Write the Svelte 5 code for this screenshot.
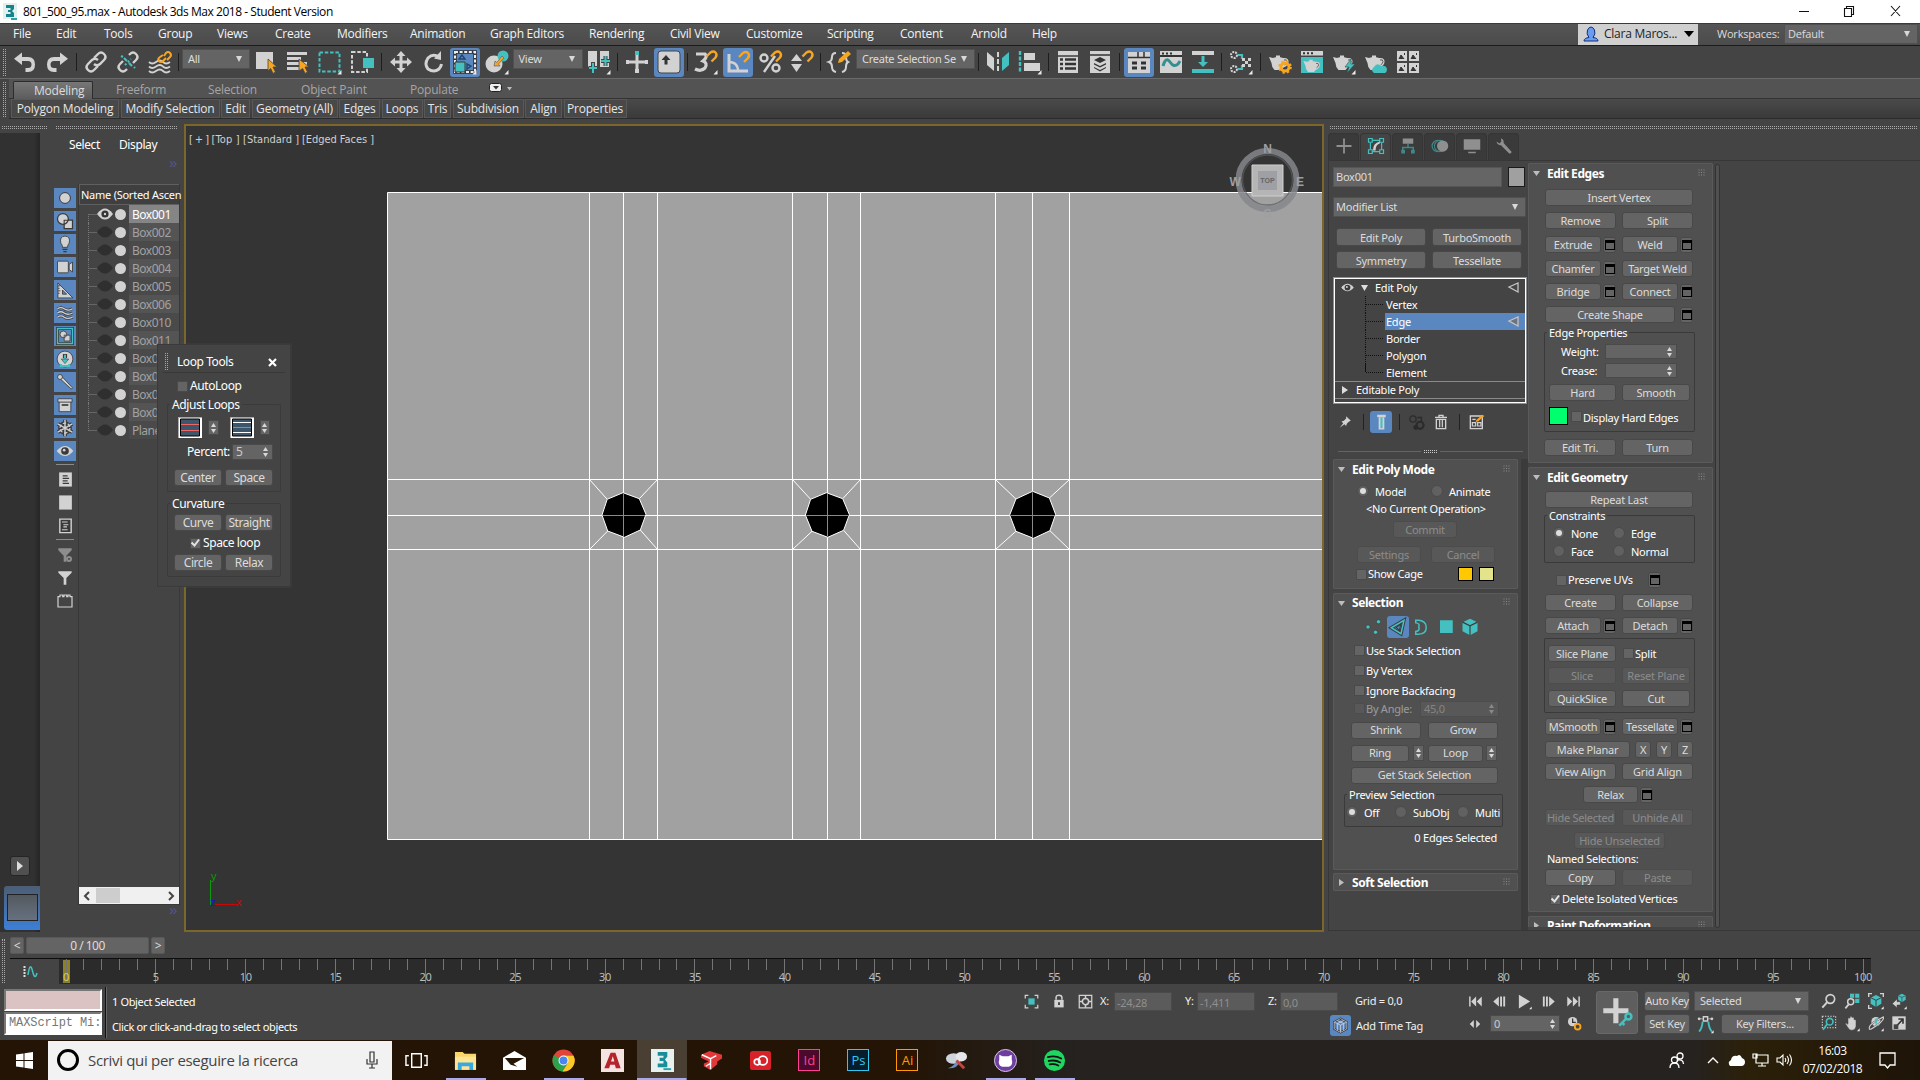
<script>
  const L = '#d2d2d2', T = '#45c0c0', O = '#f8a61f', D = '#3a3a3a';
  const corner = `<path d="M23.500 20v4.500h-4z" fill="#ececec"/>`;
  const pot = `<path d="M1 7l4 1q5-2 10 0 1 0 1.500 0 4 0 4 3.500 0 4-5 6l-2 2.500h-7q-3-3-3-7z M8 5.500h4v2h-4z" fill="${L}"/><path d="M16 10q3-1 3 1.500 0 2-2.500 3.500" fill="none" stroke="#555" stroke-width="1"/>`;
  const magnet = (x, y) => `<g transform="translate(${x} ${y})"><path d="M1 6L5 2q3-2 5 0t0 5L6 11" fill="none" stroke="${O}" stroke-width="2.400"/></g>`;
  const chain = `<g fill="none" stroke="${L}" stroke-width="2.400"><path d="M10 8l4-4q3-3 6 0t0 6l-4 4q-3 2.500-6 0"/><path d="M14 16l-4 4q-3 3-6 0t0-6l4-4q3-2.500 6 0"/></g>`;
  const cubes = `<path d="M12 3l8 4v9l-8 5-8-5V7z" fill="${T}"/><path d="M4 7l8 4 8-4M12 11v10" fill="none" stroke="${D}" stroke-width="1.400"/>`;
  const eye = `<path d="M2 12q10-12 20 0-10 12-20 0z" fill="${L}"/><circle cx="12" cy="12" r="4.600" fill="${D}"/><circle cx="11" cy="11" r="1.600" fill="${L}"/>`;
  const icons = {
    undo: `<path d="M9 2.500v4.500h6q7 0 7 7.500t-7 7.500h-2.500v-4h2.500q3.500 0 3.500-3.500t-3.500-3.500H9V15L1 8.700z" fill="${L}"/>`,
    redo: `<path d="M15 2.500v4.500H9q-7 0-7 7.500t7 7.500h2.500v-4H9q-3.500 0-3.500-3.500T9 11h6V15l8-6.300z" fill="${L}"/>`,
    link: chain,
    unlink: `<g fill="none" stroke="${L}" stroke-width="2.400"><path d="M13 5l1-1q3-3 6 0t0 6l-3 3"/><path d="M11 19l-1 1q-3 3-6 0t0-6l3-3"/></g><path d="M8 8l3 3M16 16l-3-3M5 6l2 1M18 17l1 1" stroke="${T}" stroke-width="2.200"/><path d="M9 15l6-6" stroke="${T}" stroke-width="2" stroke-dasharray="2 2"/>`,
    bind: `<g fill="none" stroke="${L}" stroke-width="1.800"><path d="M1 12q3 3 7 0t7 0 7 0"/><path d="M1 16.500q3 3 7 0t7 0 7 0"/><path d="M1 21q3 3 7 0t7 0 7 0"/></g><g fill="none" stroke="${O}" stroke-width="2"><path d="M16 6l2-3q2-2 4 0t0 4l-3 3"/><path d="M18 8l-3 3q-2 2-4 0t1-4l3-2"/></g>`,
    select: `<path d="M2 2h17v17H2z" fill="${L}"/><path d="M14 9l9 8h-4l2.500 5-2.500 1.500-2.300-5-2.700 2.500z" fill="${O}" stroke="#444" stroke-width=".8"/>`,
    byname: `<path d="M1 2h20v3H1zM1 7h14v3H1zM1 12h20v3H1zM1 17h12v3H1z" fill="${L}"/><path d="M13 9l10 8h-4l2.500 5-2.500 1.500-2.300-5-3.700 2.500z" fill="${O}" stroke="#444" stroke-width=".8"/>`,
    region: `<rect x="1.500" y="2.500" width="20" height="19" fill="none" stroke="${T}" stroke-width="2" stroke-dasharray="3.500 1.800"/>${corner}`,
    crossing: `<rect x="2" y="2" width="15" height="20" fill="none" stroke="${L}" stroke-width="2" stroke-dasharray="3.500 1.800"/><path d="M13 8h11v10H13z" fill="${T}"/>`,
    move: `<path d="M12 1l4.500 5h-3v4.500H18v-3l5 4.500-5 4.500v-3h-4.500V18h3L12 23l-4.500-5h3v-4.500H6v3L1 12l5-4.500v3h4.500V6h-3z" fill="${L}"/>`,
    rotate: `<path d="M18 7q-6-4-11 1-4 6 0 11 6 4 11 0 2-2 2.500-5" fill="none" stroke="${L}" stroke-width="3"/><path d="M13 8.500L20 1v9z" fill="${L}"/>`,
    scale: `<rect x="2" y="2" width="20" height="20" fill="#5b87c0" stroke="#333" stroke-width="3.600"/><rect x="2" y="2" width="20" height="20" fill="none" stroke="#eee" stroke-width="2" stroke-dasharray="3 1.600"/><path d="M2 12h10v10H2z" fill="${T}" stroke="#383838"/><path d="M6 9l3-4 3 4zM14 19v-5l4 2z" fill="none" stroke="#20476a" stroke-width="1.400"/>${corner}`,
    place: `<circle cx="9" cy="14" r="8.500" fill="${L}"/><circle cx="18" cy="6" r="5.500" fill="${T}"/><path d="M9 16l1-5 1.800 1.500L17 6l2 2-5.500 6L15 16z" fill="${O}" stroke="#555" stroke-width=".6"/>${corner}`,
    pivot: `<path d="M1 1h9v16H1zM13 1h9v16h-9z" fill="${L}"/><path d="M6 12v11M1.500 18h9M18.500 6v10M14 11h9" stroke="#444" stroke-width="4"/><path d="M6 13v10M2 18h8M18.500 6v10M14 11h9" stroke="${T}" stroke-width="2"/>${corner}`,
    manip: `<path d="M12 3v19M2 12h20" stroke="${L}" stroke-width="3"/><path d="M10 1h4v4h-4z" fill="${T}"/><path d="M10 19h4v4h-4zM1 10h3v4H1zM20 10h3v4h-3z" fill="${L}"/>`,
    keyboard: `<rect x="1" y="1" width="22" height="22" rx="3" fill="${L}" stroke="#444"/><path d="M9 5l4.500 5h-3v4.500h-3V10h-3z" fill="#333"/>`,
    snap3: `<path d="M2 4h9q3 3-2 7 5 2 2 7-4 4-10 1" fill="none" stroke="${L}" stroke-width="3.200"/>${magnet(11.500, .5)}${corner}`,
    angle: `<path d="M3 4v17h19" fill="none" stroke="${L}" stroke-width="3"/><path d="M3 12q9 0 9 9" fill="none" stroke="${L}" stroke-width="2.400"/>${magnet(12, 1)}`,
    percent: `<circle cx="6" cy="8" r="3.500" fill="none" stroke="${L}" stroke-width="2.400"/><circle cx="18" cy="18" r="3.500" fill="none" stroke="${L}" stroke-width="2.400"/><path d="M17 6L6 22" stroke="${L}" stroke-width="2.400"/>${magnet(12, .5)}`,
    spin: `<path d="M1 11l5.500-7 5.500 7zM1 14h11l-5.500 8z" fill="${L}"/>${magnet(11.500, .5)}`,
    sets: `<path d="M8 3q-4 0-4 4t-3 5q3 1 3 5t4 5M14 3q4 0 4 4t2 5q-2 1-2 5t-4 5" fill="none" stroke="${L}" stroke-width="2"/><path d="M10 13l1-4L20 1l3 3-9 8z" fill="${O}"/>`,
    mirror: `<path d="M1 2l7 6v13l-7-6z" fill="${L}"/><path d="M12 2v20" stroke="${L}" stroke-width="2" stroke-dasharray="5 2"/><path d="M23 2l-7 6v13l7-6z" fill="${T}"/>`,
    align: `<path d="M2 1v22" stroke="${T}" stroke-width="2.400" stroke-dasharray="4 1.500"/><path d="M6 3h11v7H6zM6 13h16v8H6z" fill="${L}"/>${corner}`,
    layers: `<path d="M2 1h20v22H2z" fill="${L}"/><path d="M2 6h20" stroke="#333" stroke-width="1.400"/><path d="M4 9.500h3M9 9.500h11M4 14h3M9 14h11M4 18.500h3M9 18.500h11" stroke="#333" stroke-width="2.400"/>`,
    stackdoc: `<path d="M2 1h20v22H2z" fill="${L}"/><path d="M2 5h20" stroke="#333" stroke-width="1.500"/><path d="M12 7l6 3-6 3-6-3zM6 13l6 3 6-3v1.500l-6 3-6-3zM6 17l6 3 6-3v1l-6 3.500L6 18z" fill="#333"/>`,
    ribbon: `<path d="M1 2h22v21H1z" fill="${L}"/><path d="M1 7.500h22M11 2v5M17 2v5" stroke="#333" stroke-width="1.500"/><path d="M5 13h5M14 13h5M5 18h5M14 18h5" stroke="#333" stroke-width="3"/>`,
    curve: `<path d="M1 1h22v22H1z" fill="${L}"/><path d="M1 6h22M3 3.500h2M7 3.500h2M11 3.500h2" stroke="#333" stroke-width="2"/><path d="M4 16q3-10 7-4t8 2l2-3" fill="none" stroke="#358f90" stroke-width="3"/>`,
    schem: `<path d="M1 1h22v4H1z" fill="${L}"/><path d="M1 19h22v4H1z" fill="${T}"/><path d="M12 6v8" stroke="${T}" stroke-width="3"/><path d="M7 12h10l-5 5z" fill="${T}"/>`,
    material: `<g fill="none" stroke="${L}" stroke-width="2" stroke-dasharray="2 1"><circle cx="5" cy="5" r="3"/><circle cx="5" cy="19" r="3"/></g><path d="M9 5h4v4M9 19h4v-4" fill="none" stroke="${T}" stroke-width="2.200"/><path d="M13 8h3v3h-3zM19 8h3v3h-3zM16 11h3v3h-3zM13 14h3v3h-3zM19 14h3v3h-3z" fill="${L}"/>${corner}`,
    rsetup: `${pot}<circle cx="17" cy="17" r="4" fill="none" stroke="${O}" stroke-width="3"/><circle cx="17" cy="17" r="5.800" fill="none" stroke="${O}" stroke-width="2" stroke-dasharray="2.200 2.400"/>`,
    rframe: `<path d="M1 1h22v4.500H1z" fill="${L}"/><path d="M1 7h22v16H1z" fill="${T}"/><path d="M3 3.300h2M7 3.300h2M11 3.300h2" stroke="#333" stroke-width="2"/><g transform="translate(2.500 5) scale(.85)">${pot}</g>`,
    render: `${pot}<path d="M19 9l-6 8h4l-2 6 8-9h-4z" fill="${T}" stroke="#444" stroke-width=".6"/>${corner}`,
    cloud: `${pot}<path d="M10 23q-4-3 0-6 3-5 7-1 5-1 6 3 0 3-2 4z" fill="${T}"/>`,
    gallery: `<path d="M1 1h10v10H1zM13 1h10v10H13zM1 13h10v10H1zM13 13h10v10H13z" fill="${L}"/><path d="M3 9l2-4 3 4M15 9l2-4 3 4M3 21l2-4 3 4M15 21l2-4 3 4" fill="#333" stroke="#333"/><path d="M8 4h1M20 4h1M8 16h1M20 16h1" stroke="#333" stroke-width="2"/>`,
    circle: `<circle cx="12" cy="12" r="6.500" fill="${L}" stroke="${D}" stroke-width="1.200"/>`,
    shapes: `<path d="M11 11h10v10H11z" fill="${L}" stroke="${D}" stroke-width="1.500"/><circle cx="9.500" cy="9.500" r="6.500" fill="${L}" stroke="${D}" stroke-width="1.500"/><path d="M11 16v-5h5" fill="none" stroke="${D}" stroke-width="1.300"/>`,
    bulb: `<path d="M9 16q0-3-2-5-2-8 5-8.500 7 .5 5 8.500-2 2-2 5z" fill="${L}" stroke="${D}"/><path d="M9 18.500h6M10 21h4" stroke="${D}" stroke-width="1.500"/>`,
    camera: `<rect x="3" y="5" width="13" height="14" rx="1" fill="${L}" stroke="${D}"/><path d="M17 9l4-3v12l-4-3z" fill="${L}" stroke="${D}"/>`,
    tri: `<path d="M3.500 3.500v18h18z" fill="${L}" stroke="${D}"/><path d="M9 12v5h5z" fill="#5b87c0" stroke="${D}"/><path d="M3.500 7h3M3.500 10h2M3.500 13h3M3.500 16h2" stroke="${D}"/>`,
    waves: `<g fill="none" stroke="${D}" stroke-width="3.400"><path d="M3 7q4-3 8 0t10 0M3 12q4-3 8 0t10 0M3 17q4-3 8 0t10 0"/></g><g fill="none" stroke="${L}" stroke-width="1.600"><path d="M3 7q4-3 8 0t10 0M3 12q4-3 8 0t10 0M3 17q4-3 8 0t10 0"/></g>`,
    group: `<path d="M3 3h18v18H3z" fill="#5b87c0" stroke="${D}" stroke-width="3.600"/><path d="M3 3h18v18H3z" fill="none" stroke="${T}" stroke-width="1.700"/><path d="M11 11h7v7h-7z" fill="${L}" stroke="${D}"/><circle cx="10" cy="10" r="4" fill="${L}" stroke="${D}"/><path d="M11 14v-3h3" fill="none" stroke="${D}"/>`,
    xref: `<circle cx="12" cy="12" r="9.500" fill="${L}" stroke="${D}"/><path d="M12 6v5" stroke="${D}" stroke-width="5"/><path d="M12 7v5M7 18v2.500h10V18" stroke="${T}" stroke-width="2.400" fill="none"/><path d="M7.500 12h9L12 17.500z" fill="${T}" stroke="${D}" stroke-width=".7"/>`,
    bone: `<path d="M8 5l13 14-1.500 1.500L6 8z" fill="${L}" stroke="${D}"/><circle cx="6" cy="6" r="3" fill="${L}" stroke="${D}"/>`,
    box: `<path d="M5 8h14v12H5z" fill="${L}" stroke="${D}"/><path d="M3.500 4.500h17v4h-17z" fill="${L}" stroke="${D}"/><path d="M8 12h8" stroke="${D}" stroke-width="2"/>`,
    frost: `<path d="M12 2v20M3.300 7l17.400 10M20.700 7L3.300 17" stroke="${D}" stroke-width="4.500"/><circle cx="12" cy="12" r="6.500" fill="none" stroke="${D}" stroke-width="3.500"/><path d="M12 2v20M3.300 7l17.400 10M20.700 7L3.300 17" stroke="${L}" stroke-width="1.700"/><circle cx="12" cy="12" r="6" fill="none" stroke="${L}" stroke-width="1.500" stroke-dasharray="4.200 2"/>`,
    eye,
    doc: `<path d="M3 2h18v20H3z" fill="${L}"/><path d="M8 7h7M8 10.500h9M8 14h7M8 17.500h9" stroke="${D}" stroke-width="1.700"/>`,
    blank: `<path d="M3 2h18v20H3z" fill="${L}"/>`,
    doc2: `<path d="M4 3h16v19H4z" fill="${D}" stroke="${L}" stroke-width="2"/><path d="M7 7h8M9 11h7M9 14h5M7 18h8" stroke="${L}" stroke-width="1.600"/>`,
    funnelg: `<path d="M2 2h20v3l-8 8v9h-4v-9L2 5z" fill="#8d8d8d"/><circle cx="18" cy="18" r="3" fill="#444" stroke="#8d8d8d" stroke-width="3"/>`,
    funnel: `<path d="M2 2h20v2l-8 8v10h-4V12L2 4z" fill="${L}"/>`,
    brick: `<path d="M1.500 21V5.500h3V3h4v2.500h2V3h4v2.500h2V3h3v2.500h3V21z" fill="none" stroke="${L}" stroke-width="1.800"/>`,
    plus: `<path d="M12 2v20M2 12h20" stroke="#8f8f8f" stroke-width="2.400"/>`,
    modify: `<path d="M4.500 5v14M5 19.500h14M19.500 19V5M19 4.500H5" stroke="${T}" stroke-width="1.600"/><path d="M2 2h5v5H2zM17 2h5v5h-5zM2 17h5v5H2zM17 17h5v5h-5z" fill="#444" stroke="${T}" stroke-width="1.600"/><path d="M8 18q0-10 9-12v2.500q-6 2-5.500 9.500z" fill="${L}"/>`,
    hier: `<path d="M5 2h14v7H5z" fill="#8f8f8f"/><path d="M12 9v4M5 18v-4h14v4" fill="none" stroke="#408787" stroke-width="2"/><path d="M3 17h5v5H3zM16 17h5v5h-5z" fill="#408787"/>`,
    motion: `<circle cx="9" cy="12" r="7.500" fill="none" stroke="#408787" stroke-width="1.600"/><circle cx="12" cy="12" r="7.500" fill="#3a3a3a" stroke="#408787" stroke-width="1.400"/><circle cx="15.500" cy="12" r="7.500" fill="#8f8f8f"/>`,
    display: `<path d="M1 3h22v14H1zM7 19.500h10v2H7z" fill="#8f8f8f"/>`,
    wrench: `<path d="M8 2q4 1 3.500 6L22 19.500q0 3-3 2.500L8 11q-5 0-6-5l4 2.500L8.500 6z" fill="#8f8f8f"/>`,
    pin: `<path d="M14 2l8 8-3 1-4 4-1 4-3-3-8 6 6-8-3-3 4-1 4-4z" fill="${L}"/>`,
    tube: `<path d="M6 1h12v3.500H6zM8 5h8v17H8z" fill="${L}"/><path d="M10.500 5h3v15h-3z" fill="${T}"/>`,
    unique: `<circle cx="7" cy="7" r="4.500" fill="none" stroke="#2b2b2b" stroke-width="1.800"/><circle cx="17" cy="16" r="5" fill="none" stroke="#2b2b2b" stroke-width="3"/><circle cx="11" cy="19" r="3.500" fill="#2b2b2b"/><path d="M13 5h6v6" fill="none" stroke="#2b2b2b" stroke-width="2"/>`,
    trash: `<path d="M3 5h18M9 4V2h6v2M5 8v14h14V8z" fill="none" stroke="${L}" stroke-width="2"/><path d="M10 9v11M14 9v11" stroke="${L}" stroke-width="1.800"/>`,
    config: `<path d="M2 3h18v19H2z" fill="none" stroke="${L}" stroke-width="2"/><path d="M5 8h5M5 13h5v5H5zM13 13h5v5h-5z" fill="none" stroke="${L}" stroke-width="1.800"/><path d="M10 12l1-3 9-8 3 2-9 8z" fill="${O}"/>`,
    verts: `<g fill="${T}" stroke="${D}" stroke-width=".8"><circle cx="4" cy="12" r="2.800"/><circle cx="18" cy="5" r="2.800"/><circle cx="14" cy="19" r="2.800"/></g>`,
    edge: `<path d="M3 13L20 3l-4 18z" fill="none" stroke="${D}" stroke-width="4.500"/><path d="M3 13L20 3l-4 18z" fill="none" stroke="${T}" stroke-width="2"/><path d="M9.500 12.500l6-4-1.500 8z" fill="none" stroke="${D}" stroke-width="1.400"/>`,
    border: `<path d="M5 3h4q10 1 10 9.500T9 21.500H5v-3.500q6-1 4-6 2-5-4-5.500z" fill="none" stroke="${T}" stroke-width="2"/>`,
    poly: `<path d="M4 3h17v17H4z" fill="${T}"/>`,
    element: `<path d="M12 1l10 4.500v12L12 23 2 17.500v-12z" fill="${T}"/><path d="M2 5.500l10 5 10-5M12 10.500V23" fill="none" stroke="${D}" stroke-width="1.500"/>`,
    region2: `<path d="M2 7V2h5M17 2h5v5M22 17v5h-5M7 22H2v-5" fill="none" stroke="${L}" stroke-width="2"/><path d="M7 7h10v10H7z" fill="${T}"/>`,
    lock: `<path d="M4 10h16v13H4z" fill="${L}"/><path d="M7 10V6q0-4 5-4t5 4v4" fill="none" stroke="${L}" stroke-width="2.600"/><path d="M12 14v5" stroke="#333" stroke-width="3"/>`,
    absrel: `<path d="M2 2h20v20H2z" fill="none" stroke="${L}" stroke-width="2"/><circle cx="12" cy="12" r="5" fill="none" stroke="${L}" stroke-width="2.400"/><path d="M12 2v5M12 17v5M2 12h5M17 12h5" stroke="${L}" stroke-width="2.400"/>`,
    start: `<path d="M3 4v16" stroke="${L}" stroke-width="2.400"/><path d="M13 4v16L5 12zM22 4v16l-8-8z" fill="${L}"/>`,
    prev: `<path d="M11 4v16L2 12z" fill="${L}"/><path d="M14.500 4v16M19.500 4v16" stroke="${L}" stroke-width="3"/>`,
    play: `<path d="M3 1l18 11L3 23z" fill="${L}"/>${corner}`,
    next: `<path d="M13 4v16l9-8z" fill="${L}"/><path d="M9.500 4v16M4.500 4v16" stroke="${L}" stroke-width="3"/>`,
    end: `<path d="M21 4v16" stroke="${L}" stroke-width="2.400"/><path d="M11 4v16l8-8zM2 4v16l8-8z" fill="${L}"/>`,
    keymode: `<path d="M10 5v14l-7-7zM14 5v14l7-7z" fill="${L}"/>`,
    clock: `<circle cx="9" cy="9" r="7.500" fill="${L}"/><path d="M9 4v6h5" fill="none" stroke="#333" stroke-width="2"/><circle cx="17" cy="17" r="4.500" fill="#444" stroke="${O}" stroke-width="3"/>`,
    tangent: `<path d="M2 4h20" stroke="${L}"/><path d="M9 1h6v6H9z" fill="#444" stroke="${L}" stroke-width="2"/><circle cx="3" cy="4" r="2" fill="${L}"/><circle cx="21" cy="4" r="2" fill="${L}"/><path d="M3 22q4-4 5-14M21 22q-4-4-5-14" fill="none" stroke="${T}" stroke-width="2.600"/>${corner}`,
    zoom: `<circle cx="14" cy="9" r="6.500" fill="none" stroke="${L}" stroke-width="2.400"/><path d="M9 14l-7 8" stroke="${L}" stroke-width="3"/>`,
    zoomall: `<path d="M9 1h14v14H9z" fill="${T}"/><path d="M16 1v14M9 8h14" stroke="#444" stroke-width="1.500"/><circle cx="10" cy="13" r="4.500" fill="#444" stroke="${L}" stroke-width="2.200"/><path d="M7 17l-5 6" stroke="${L}" stroke-width="2.600"/>`,
    extents: `<path d="M1 6V1h5M18 1h5v5M1 18v5h5" fill="none" stroke="${L}" stroke-width="2"/>${cubes}${corner}`,
    extall: `<g transform="translate(8 -1) scale(.7)">${cubes}</g><path d="M2 16l7-7v4h5v5H9v4z" fill="${L}" stroke="#444" stroke-width=".8"/>${corner}`,
    fov: `<rect x="2" y="2" width="20" height="17" fill="none" stroke="${L}" stroke-width="1.600" stroke-dasharray="2 2"/><circle cx="13" cy="10" r="5" fill="#444" stroke="${T}" stroke-width="2.400"/><path d="M9 14l-6 8" stroke="${T}" stroke-width="2.600"/>`,
    pan: `<path d="M6 14V5q1.500-2 3 0V3q1.500-2 3 0v1q1.500-2 3 0v3q1.500-1 3 1v9q-1 6-6 6-4 0-6-4l-4-6q1-2 4 1z" fill="${L}" stroke="#444" stroke-width=".8"/>${corner}`,
    orbit: `<circle cx="12" cy="10" r="7" fill="${L}"/><path d="M2 21Q0 16 12 9t11-6q2 4-9 12t-12 6z" fill="none" stroke="#444" stroke-width="3"/><path d="M2 21Q0 16 12 9t11-6q2 4-9 12t-12 6z" fill="none" stroke="${L}" stroke-width="1.800"/><path d="M10 6l5-2-3 14z" fill="${T}"/>${corner}`,
    maxi: `<path d="M2 2h20v20H2z" fill="${L}"/><path d="M8 17l9-10M11 6h7v7" fill="none" stroke="#333" stroke-width="2.400"/><path d="M4 14h7v7H4z" fill="#444"/>`,
    addtag: `<path d="M12 1l10 5.500v11L12 23 2 17.500v-11z" fill="#5b87c0" stroke="#20242c" stroke-width="3"/><path d="M12 1l10 5.500v11L12 23 2 17.500v-11zM2 6.500l10 5 10-5M12 11.500V23M7 4l10 5v11M17 4L7 9v11" fill="none" stroke="${L}" stroke-width="1.300"/>`,
    bigkey: `<path d="M10 -1v22M-1 10h22" stroke="${L}" stroke-width="4.500"/><g fill="none" stroke="${T}" stroke-width="2.200"><circle cx="21" cy="15" r="2.600"/><path d="M19 17l-6 6M15.500 20.500l2 2"/></g>`,
  };

  const menus = [['File', 43], ['Edit', 48], ['Tools', 54], ['Group', 59], ['Views', 58], ['Create', 62], ['Modifiers', 73], ['Animation', 80], ['Graph Editors', 99], ['Rendering', 81], ['Civil View', 76], ['Customize', 81], ['Scripting', 73], ['Content', 71], ['Arnold', 61], ['Help', 40]];

  // Main toolbar: icon name, 'sep' / 'thin' divider, or a drop-down with its own width
  const tools = ['undo', 'redo', 'sep', 'link', 'unlink', 'bind', 'sep', { l: 'All', w: 68 }, 'select', 'byname', 'region', 'crossing', 'sep', 'move', 'rotate', '*scale', 'place', { l: 'View', w: 70 }, 'pivot', 'sep', 'manip', '*keyboard', 'thin', 'snap3', '*angle', 'percent', 'spin', 'sep', 'sets', { l: 'Create Selection Se', w: 119 }, 'sep', 'mirror', 'align', 'sep', 'layers', 'stackdoc', 'sep', '*ribbon', 'curve', 'schem', 'sep', 'material', 'sep', 'rsetup', 'rframe', 'render', 'cloud', 'gallery'];

  const tabs = [['Freeform', 92], ['Selection', 93], ['Object Paint', 109], ['Populate', 79]];
  const panels = [['Polygon Modeling', 108], ['Modify Selection', 99], ['Edit', 29], ['Geometry (All)', 86], ['Edges', 41], ['Loops', 41], ['Tris', 27], ['Subdivision', 71], ['Align', 37], ['Properties', 63]];

  const filters = ['circle', 'shapes', 'bulb', 'camera', 'tri', 'waves', 'group', 'xref', 'bone', 'box', 'frost', 'eye'];
  const objects = ['Box001', 'Box002', 'Box003', 'Box004', 'Box005', 'Box006', 'Box010', 'Box011', 'Box012', 'Box013', 'Box014', 'Box015', 'Plane'];

  // Rollout items: k = kind, l = label, g = gap before, w = width
  const b = (l, g, w) => ({ k: 'b', l, g, w });
  const d = (l, g, w) => ({ k: 'b', l, g, w, off: true });
  const s = (g = 2) => ({ k: 's', g, w: 13 });
  const c = (l, g, w, o = {}) => ({ k: 'c', l, g, w, ...o });
  const r = (l, g, w, on = false) => ({ k: 'r', l, g, w, on });
  const t = (l, g, w, a = '') => ({ k: 't', l, g, w, a });
  const f = (l, g, w, off = false) => ({ k: 'f', l, g, w, off });
  const sw = (col, g, w) => ({ k: 'w', col, g, w });
  const ic = (l, g, on = false) => ({ k: 'i', l, g, w: 22, on });
  const row = (m, items, h = 17) => ({ m, h, items });

  const col1 = [
    { title: 'Edit Poly Mode', h: 130, rows: [
      row(4, [r('Model', 24, 74, true), r('Animate', 0, 70)], 13),
      row(4, [t('<No Current Operation>', 33, 120)], 14),
      row(5, [d('Commit', 60, 64)]),
      row(8, [d('Settings', 24, 64), d('Cancel', 10, 64)]),
      row(4, [c('Show Cage', 23, 102), sw('#ffc800', 0, 15), sw('#e3e38a', 6, 15)], 14),
    ] },
    { title: 'Selection', h: 277, rows: [
      row(1, [ic('verts', 30), ic('edge', 2, true), ic('border', 1), ic('poly', 3), ic('element', 2)], 22),
      row(7, [c('Use Stack Selection', 21, 120)], 12),
      row(8, [c('By Vertex', 21, 120)], 12),
      row(8, [c('Ignore Backfacing', 21, 120)], 12),
      row(4, [c('By Angle:', 21, 66, { off: true }), f('45,0', 0, 79, true)], 16),
      row(5, [b('Shrink', 18, 70), b('Grow', 7, 70)]),
      row(6, [b('Ring', 18, 58), { k: 'p', g: 4, w: 11 }, b('Loop', 4, 55), { k: 'p', g: 3, w: 11 }]),
      row(5, [b('Get Stack Selection', 18, 147)]),
      { m: 10, h: 33, g: 11, w: 159, box: 'Preview Selection', rows: [row(5, [r('Off', 2, 49, true), r('SubObj', 0, 62), r('Multi', 0, 40)], 13)] },
      row(4, [t('0 Edges Selected', 64, 100, 'right')], 14),
    ] },
    { title: 'Soft Selection', h: 18, closed: true, rows: [] },
  ];
  const col2 = [
    { title: 'Edit Edges', h: 300, rows: [
      row(4, [b('Insert Vertex', 17, 148)]),
      row(6, [b('Remove', 17, 71), b('Split', 6, 71)]),
      row(7, [b('Extrude', 17, 56), s(), b('Weld', 6, 56), s()]),
      row(7, [b('Chamfer', 17, 56), s(), b('Target Weld', 6, 71)]),
      row(6, [b('Bridge', 17, 56), s(), b('Connect', 6, 56), s()]),
      row(6, [b('Create Shape', 17, 130), s(5)]),
      { m: 9, h: 100, g: 16, w: 151, box: 'Edge Properties', rows: [
        row(5, [t('Weight:', 17, 44), f('', 0, 72)], 15),
        row(4, [t('Crease:', 17, 44), f('', 0, 72)], 15),
        row(6, [b('Hard', 5, 67), b('Smooth', 6, 68)]),
        row(6, [sw('#00ff6e', 5, 19), c('Display Hard Edges', 3, 110, { low: true })], 18),
      ] },
      row(7, [b('Edit Tri.', 16, 72), b('Turn', 6, 71)]),
    ] },
    { title: 'Edit Geometry', h: 445, rows: [
      row(2, [b('Repeat Last', 17, 148)]),
      { m: 7, h: 48, g: 16, w: 151, box: 'Constraints', rows: [
        row(5, [r('None', 9, 60, true), r('Edge', 0, 60)], 13),
        row(5, [r('Face', 9, 60), r('Normal', 0, 60)], 13),
      ] },
      row(9, [c('Preserve UVs', 28, 92), s(0)], 16),
      row(6, [b('Create', 17, 71), b('Collapse', 6, 71)]),
      row(6, [b('Attach', 17, 56), s(), b('Detach', 6, 56), s()]),
      { m: 4, h: 75, g: 16, w: 151, rows: [
        row(7, [b('Slice Plane', 4, 68), c('Split', 7, 60)]),
        row(5, [d('Slice', 4, 68), d('Reset Plane', 6, 68)]),
        row(6, [b('QuickSlice', 4, 68), b('Cut', 6, 68)]),
      ] },
      row(5, [b('MSmooth', 17, 56), s(), b('Tessellate', 6, 56), s()]),
      row(6, [b('Make Planar', 17, 85), b('X', 5, 16), b('Y', 5, 16), b('Z', 5, 16)]),
      row(5, [b('View Align', 17, 71), b('Grid Align', 6, 71)]),
      row(6, [b('Relax', 55, 55), s()]),
      row(6, [d('Hide Selected', 17, 71), d('Unhide All', 6, 71)]),
      row(6, [d('Hide Unselected', 46, 91)]),
      row(3, [t('Named Selections:', 19, 120)], 14),
      row(3, [b('Copy', 17, 71), d('Paste', 6, 71)]),
      row(7, [c('Delete Isolated Vertices', 22, 140, { on: true })], 12),
    ] },
    { title: 'Paint Deformation', h: 22, rows: [], closed: true },
  ];

  const stack = ['Vertex', 'Edge', 'Border', 'Polygon', 'Element'];
  const cmdTabs = ['plus', 'modify', 'hier', 'motion', 'display', 'wrench'];

  const holes = [
    { box: [589.5, 623.5, 657.5], p: [[623, 492.7], [607.2, 499.3], [602, 515], [607.7, 531], [624.5, 537.3], [640.3, 530], [646, 514.3], [639.3, 498.7]] },
    { box: [792.5, 827.5, 860.5], p: [[826.4, 492.7], [810.6, 499.3], [805.4, 515], [812, 531.3], [827.8, 537.3], [843.6, 530.3], [849.4, 514.7], [842.7, 498.7]] },
    { box: [995.5, 1032.5, 1069.5], p: [[1032.6, 491.3], [1015.9, 499], [1009.7, 515], [1015.9, 531.3], [1033.6, 538.3], [1049.9, 530.7], [1055.6, 514.3], [1049.4, 498]] },
  ];
  const viewLabels = [['[+]', 189, 20], ['[Top ]', 211.5, 28], ['[Standard ]', 243, 56], ['[Edged Faces ]', 302, 72]];
  const ticks = Array.from({ length: 101 }, (_, i) => i);

  const apps = [
    { s: `<path d="M7 5h10v14H7zM4 7H1v10h3M20 7h3v10h-3" fill="none" stroke="#fff" stroke-width="1.500"/>` },
    { open: 1, s: `<path d="M1 3h8l2 2h12v17H1z" fill="#f9d66b"/><path d="M1 8h22v13H1z" fill="#fde596"/><path d="M4 22v-8h16v8h-4v-4H8v4z" fill="#36a9e0"/>` },
    { s: `<path d="M0 9l12-7 12 7v13H0z" fill="#fff"/><path d="M2 9.500h20l-11 6 4 3-7-2z" fill="#241504"/>` },
    { open: 1, s: `<circle cx="12" cy="12" r="11.500" fill="#e0453a"/><path d="M2 6.500A11.500 11.500 0 0 0 11 23.500L16.500 14 12 12z" fill="#2ca24c"/><path d="M12 7h10.500A11.500 11.500 0 0 1 11 23.500L17 14z" fill="#fbc926"/><circle cx="12" cy="12" r="5.200" fill="#fff"/><circle cx="12" cy="12" r="4.200" fill="#4b86ee"/>` },
    { s: `<path d="M0 0h24v24H0z" fill="#f5e3e0"/><path d="M3.500 20L10 4h5l5.500 16h-5l-1-3.500H9.500l-1 3.500zM10.500 13h3.500l-1.700-5.500z" fill="#b5232b"/>` },
    { open: 1, on: 1, s: `<path d="M0 0h24v24H0z" fill="#e6f1f0"/><path d="M7 3h10v5l-2.500 3 2.500 3v5H7v-4h6v-2.500H9V9h4V7H7z" fill="#1b8d98"/><path d="M13 20h8v2h-8z" fill="#30a0a8"/>` },
    { s: `<path d="M1 6l9-4 13 4v4l-5 3v3l-7 6-7-4v-3l5-2-8-4z" fill="#e2383a"/><path d="M2 6l9 4 6-3M11 10v5l-5 3M11 15v6" fill="none" stroke="#fff" stroke-width="1.500"/>` },
    { s: `<rect x="1" y="2" width="22" height="20" rx="3" fill="#d8222a"/><circle cx="8.500" cy="13.500" r="3" fill="none" stroke="#fff" stroke-width="1.700"/><circle cx="14.500" cy="12" r="4.600" fill="none" stroke="#fff" stroke-width="1.700"/>` },
    { l: 'Id', col: '#ff3f94', bg: '#4b0a2b' },
    { l: 'Ps', col: '#31c5f0', bg: '#061e2b' },
    { l: 'Ai', col: '#ff9a00', bg: '#2b1500' },
    { s: `<ellipse cx="9" cy="10" rx="8" ry="5.500" fill="#cfd3da"/><ellipse cx="17" cy="8" rx="6" ry="5" fill="#e4e6ea"/><path d="M3 20q7-2 9-8l3 2q-3 7-12 6z" fill="#6b8fc4"/><path d="M12 12l8 8" stroke="#c8443f" stroke-width="3"/>` },
    { open: 1, s: `<circle cx="12" cy="12" r="11.500" fill="#6e3f9e" stroke="#d9cbe8"/><path d="M5.500 6l3.500 1.500h6L18.500 6v5q2 6-3 7.500H8.500q-5-1.500-3-7.500z" fill="#fff"/>` },
    { open: 1, s: `<circle cx="12" cy="12" r="11" fill="#1ed760"/><path d="M5 8.500q8-2 14 1.500M6 12.500q7-1.500 12 1.500M7 16q5-1 9 1.200" fill="none" stroke="#111" stroke-width="1.900" stroke-linecap="round"/>` },
  ];
</script>

{#snippet icon(name, size = 22)}
  <svg class="ico" width={size} height={size} viewBox="0 0 24 24">{@html icons[name]}</svg>
{/snippet}

{#snippet arrows()}
  <svg class="arrows" width="5" height="10" viewBox="0 0 5 10"><path d="M0 4l2.500-4L5 4zM0 6h5l-2.500 4z" fill="#d8d8d8" /></svg>
{/snippet}

{#snippet rowView(x)}
  <div class="row" style:margin-top="{x.m}px" style:height="{x.h}px">
    {#each x.items as i}
      <div class="cell {i.a ?? ''}" class:off={i.off} class:low={i.low} style:margin-left="{i.g}px" style:width="{i.w}px">
        {#if i.k === 'b'}
          <button class="btn">{i.l}</button>
        {:else if i.k === 's'}
          <span class="opt"><i></i></span>
        {:else if i.k === 'c'}
          <span class="check">{#if i.on}<svg width="10" height="10" viewBox="0 0 10 10"><path d="M1.500 4.500l3 3 4.500-6" fill="none" stroke="#e4e4e4" stroke-width="2" /></svg>{/if}</span><span class="lbl">{i.l}</span>
        {:else if i.k === 'r'}
          <span class="radio" class:on={i.on}></span><span class="lbl rl">{i.l}</span>
        {:else if i.k === 't'}
          <span class="lbl">{i.l}</span>
        {:else if i.k === 'f'}
          <span class="field">{i.l}{@render arrows()}</span>
        {:else if i.k === 'p'}
          <span class="spin">{@render arrows()}</span>
        {:else if i.k === 'w'}
          <span class="swatch" style:background={i.col}></span>
        {:else}
          <span class="icobtn" class:on={i.on}>{@render icon(i.l, 18)}</span>
        {/if}
      </div>
    {/each}
  </div>
{/snippet}

{#snippet rollout(p)}
  <section class="rollout" style:height="{p.h}px">
    <header class:closed={p.closed}>
      <svg width="7" height="7" viewBox="0 0 7 7"><path d={p.closed ? 'M1 0v7l5-3.500z' : 'M0 1h7L3.500 6z'} fill="#bdbdbd" /></svg>
      <b>{p.title}</b>
      <svg class="dots" width="7" height="7" viewBox="0 0 7 7"><path d="M.5 1h1M3 1h1M5.500 1h1M.5 3.500h1M3 3.500h1M5.500 3.500h1M.5 6h1M3 6h1M5.500 6h1" stroke="#8c8c8c" /></svg>
    </header>
    {#each p.rows as x}
      {#if x.rows}
        <div class="group" style:margin-top="{x.m}px" style:margin-left="{x.g}px" style:width="{x.w}px" style:height="{x.h}px">
          {#if x.box}<span class="gt">{x.box}</span>{/if}
          {#each x.rows as y}{@render rowView(y)}{/each}
        </div>
      {:else}
        {@render rowView(x)}
      {/if}
    {/each}
  </section>
{/snippet}

<div class="screen">
  <div class="title">
    <svg width="16" height="18" viewBox="0 0 16 18"><path d="M1 0h14v16H1z" fill="#dff0ef" /><path d="M4 2h8v4l-2 2 2 2v4H4v-3h4.500V9H6V7h2.500V5H4z" fill="#16828c" /><path d="M9 15h6v2H9z" fill="#2aa3aa" /></svg>
    <span class="name">801_500_95.max - Autodesk 3ds Max 2018 - Student Version</span>
    <svg class="winbtns" width="110" height="20" viewBox="0 0 110 20"><path d="M4 10.500h10M49.500 7.500h7v8h-7zM51.500 7V5.500h7v8H57M96 5l9 10M105 5l-9 10" fill="none" stroke="#111" stroke-width="1.100" /></svg>
  </div>

  <div class="menubar">
    {#each menus as [m, w]}<span class="m" style:width="{w}px">{m}</span>{/each}
    <div class="user"><svg width="16" height="16" viewBox="0 0 16 16"><path d="M1 15q0-3 5-3.500Q3 8 4.500 4 6 1 8 1t3.500 3Q13 8 10 11.500q5 .5 5 3.500z" fill="#6a9cf0" stroke="#152f78" /></svg><span>Clara Maros...</span><svg width="10" height="6" viewBox="0 0 10 6"><path d="M0 0h10L5 6z" fill="#000" /></svg></div>
    <span class="ws">Workspaces:</span>
    <div class="drop wsd">Default<i></i></div>
  </div>

  <div class="toolbar">
    <span class="vgrip"></span>
    {#each tools as x}
      {#if x === 'sep' || x === 'thin'}<span class="sep" class:thin={x === 'thin'}></span>
      {:else if x.l}<div class="drop" style:width="{x.w}px">{x.l}<i></i></div>
      {:else}<span class="tool"><span class="tb" class:on={x[0] === '*'}>{@render icon(x.replace('*', ''), 24)}</span></span>{/if}
    {/each}
  </div>

  <div class="ribbon">
    <span class="vgrip"></span>
    <div class="rb">
      <div class="rtabs"><span class="rt active">Modeling</span>{#each tabs as [l, w]}<span class="rt" style:width="{w}px">{l}</span>{/each}
        <svg width="24" height="10" viewBox="0 0 24 10"><rect x=".5" y=".5" width="12" height="8" rx="2" fill="#eee" stroke="#222" /><path d="M4 3h6L7 6.500z" fill="#333" /><path d="M18 4h5l-2.500 3.500z" fill="#bbb" /></svg></div>
      <div class="rpanels">{#each panels as [l, w]}<span style:width="{w}px">{l}</span>{/each}</div>
    </div>
  </div>

  <main>
    <aside class="strip">
      <span class="hgrip"></span>
      <div class="dark">
        <span class="playb"><svg width="6" height="10" viewBox="0 0 6 10"><path d="M0 0l6 5-6 5z" fill="#ddd" /></svg></span>
        <span class="layout"><i></i></span>
      </div>
    </aside>

    <aside class="explorer">
      <span class="hgrip"></span>
      <div class="exmenu"><span>Select</span><span>Display</span></div>
      <div class="more">»</div>
      <div class="exbody">
        <div class="iconcol">
          {#each filters as n}<span class="fi">{@render icon(n, 20)}</span>{/each}
          <hr />
          {#each ['doc', 'blank', 'doc2'] as n}<span class="fp">{@render icon(n, 17)}</span>{/each}
          <hr />
          {#each ['funnelg', 'funnel', 'brick'] as n}<span class="fp">{@render icon(n, 16)}</span>{/each}
        </div>
        <div class="list">
          <div class="lh">Name (Sorted Ascen</div>
          <div class="tree">
            {#each objects as o, i}
              <div class="obj" class:sel={i === 0} class:odd={i % 2}>
                <span class="branch"></span>
                <svg width="16" height="14" viewBox="0 0 16 14"><path d="M0 7q8-11 16 0-8 11-16 0z" fill={i ? '#2f2f2f' : '#d2d2d2'} />{#if !i}<circle cx="8" cy="7" r="3.600" fill="#333" /><circle cx="8" cy="7" r="1.200" fill="#d2d2d2" />{/if}</svg>
                <span class="dot"></span><span class="on">{o}</span>
              </div>
            {/each}
          </div>
          <div class="hscroll"><svg width="6" height="8" viewBox="0 0 6 8"><path d="M5 0L1 4l4 4" fill="none" stroke="#444" stroke-width="2" /></svg><i></i><svg width="6" height="8" viewBox="0 0 6 8"><path d="M1 0l4 4-4 4" fill="none" stroke="#444" stroke-width="2" /></svg></div>
        </div>
      </div>
      <div class="more">»</div>
    </aside>

    <div class="viewport">
      <svg width="1136" height="804" viewBox="186 126 1136 804">
        <path d="M387.500 192.500H1322V839.500H387.500z" fill="#a1a1a1" />
        <g stroke="#fff" fill="none">
          <path d="M1322 192.500H387.500v647H1322M387.500 479.500H1322M387.500 515.500H1322M387.500 549.500H1322" />
          {#each holes as h}<path d="M{h.box[0]} 192V840M{h.box[1]} 192V840M{h.box[2]} 192V840M{h.box[0]} 479.500L{h.p[1]}M{h.box[2]} 479.500L{h.p[7]}M{h.box[0]} 549.500L{h.p[3]}M{h.box[2]} 549.500L{h.p[5]}" />{/each}
        </g>
        {#each holes as h}
          <polygon points={h.p.join(' ')} fill="#000" stroke="#fff" />
          <path d="M{h.box[1]} {h.p[0][1] + 1}V{h.p[4][1] - 1}M{h.p[2][0] + 1} 515.500H{h.p[6][0] - 1}" stroke="#8a8a8a" />
        {/each}
        {#each viewLabels as [l, x, w]}<text {x} y="143" class="vlabel" textLength={w}>{l}</text>{/each}
        <circle cx="1267.500" cy="180" r="29" fill="none" stroke="#85878c" stroke-width="6" opacity=".85" />
        <circle cx="1267.500" cy="180" r="25" fill="none" stroke="#5b5d60" stroke-width="1.500" opacity=".7" />
        <path d="M1252 165h31v31h-31z" fill="#b5b5b5" stroke="#d0d0d0" /><path d="M1258 171h19v19h-19z" fill="#9ea0a5" />
        <text x="1267.500" y="183" text-anchor="middle" class="cube">TOP</text>
        <g class="nsew"><text x="1267.500" y="152.500">N</text><text x="1267.500" y="217.500">S</text><text x="1235" y="185.500">W</text><text x="1300" y="185.500">E</text></g>
        <path d="M210.500 880v25" stroke="#0a9a0a" /><path d="M215 904.500h22" stroke="#c80808" />
        <text x="211" y="880" class="ax" fill="#0a9a0a">y</text><text x="236" y="906" class="ax" fill="#c80808">x</text><text x="210" y="906" class="ax" fill="#1414c8">z</text>
      </svg>
    </div>

    <aside class="command">
      <span class="hgrip"></span>
      <div class="ctabs">{#each cmdTabs as n, i}<span class:active={i === 1}>{@render icon(n, 18)}</span>{/each}</div>
      <div class="cbody">
        <div class="colA">
          <div class="namerow"><span class="namef">Box001</span><span class="namesw"></span></div>
          <div class="drop modl">Modifier List<i></i></div>
          <div class="mods">{#each ['Edit Poly', 'TurboSmooth', 'Symmetry', 'Tessellate'] as m}<button class="btn">{m}</button>{/each}</div>
          <div class="stack">
            <div class="srow top">{@render icon('eye', 15)}<svg width="7" height="6" viewBox="0 0 7 6"><path d="M0 0h7L3.500 6z" fill="#ddd" /></svg><span>Edit Poly</span><svg class="mk" width="11" height="11" viewBox="0 0 11 11"><path d="M1 5l9-4v9z" fill="none" stroke="#c5c5c5" stroke-width="1.300" /></svg></div>
            <div class="subs">
              {#each stack as n}
                <div class="srow sub" class:sel={n === 'Edge'}><i></i><span>{n}{#if n === 'Edge'}<svg class="mk" width="11" height="11" viewBox="0 0 11 11"><path d="M1 5l9-4v9z" fill="#6d747e" stroke="#c5c5c5" stroke-width="1.300" /></svg>{/if}</span></div>
              {/each}
            </div>
            <div class="srow base"><svg width="6" height="8" viewBox="0 0 6 8"><path d="M0 0l6 4-6 4z" fill="#ddd" /></svg><span>Editable Poly</span></div>
          </div>
          <div class="stools">{@render icon('pin', 14)}<u></u><span class="icobtn on">{@render icon('tube', 17)}</span><u></u>{@render icon('unique', 17)}{@render icon('trash', 16)}<u></u>{@render icon('config', 16)}</div>
          <div class="split"><hr /><span></span><hr /></div>
          <div class="rolls">{#each col1 as p}{@render rollout(p)}{/each}</div>
        </div>
        <div class="colB">{#each col2 as p}{@render rollout(p)}{/each}</div>
        <div class="vbar"></div>
      </div>
    </aside>
  </main>

  <div class="timeline">
    <span class="vgrip"></span>
    <div class="tl">
      <div class="slider"><span class="sb">&lt;</span><span class="st">0 / 100</span><span class="sb">&gt;</span></div>
      <div class="track">
        <span class="tc"><svg width="15" height="12" viewBox="0 0 15 12"><path d="M1.500 0v12" stroke="#ddd" stroke-width="2" stroke-dasharray="2 1" /><path d="M5 9Q7-5 9.500 5t4.500 2" fill="none" stroke="#45c0c0" stroke-width="1.500" /></svg></span>
        <svg class="ruler" width="1812" height="25" viewBox="59 959 1812 25">
          <path d="M59 959h1812v25H59z" fill="#2b2b2b" />
          <path d="M63 960h7v23h-7z" fill="#8c8124" />
          {#each ticks as i}
            <path d="M{Math.round(65.500 + i * 17.97) + 0.5} 959v{i % 5 ? 11 : 24}" stroke="#747474" />
            {#if i % 5 === 0}<text x={66 + i * 17.97} y="981" text-anchor="middle" class="num" fill={i ? '#bdbdbd' : '#d8cf50'}>{i}</text>{/if}
          {/each}
        </svg>
      </div>
    </div>
  </div>

  <div class="status">
    <div class="mx"><span class="pink"></span><span class="mini">MAXScript Mi:</span></div>
    <span class="vline"></span>
    <div class="msgs"><span>1 Object Selected</span><span>Click or click-and-drag to select objects</span></div>
    <div class="coords">
      <div class="cr">{@render icon('region2', 15)}{@render icon('lock', 14)}{@render icon('absrel', 15)}
        <span class="cl">X:</span><span class="cf">-24,28</span><span class="cl">Y:</span><span class="cf">-1,411</span><span class="cl">Z:</span><span class="cf">0,0</span><span class="grid">Grid = 0,0</span></div>
      <div class="cr2"><span class="icobtn on">{@render icon('addtag', 15)}</span>Add Time Tag</div>
    </div>
    <div class="play">
      <div class="pr">{#each ['start', 'prev', 'play', 'next', 'end'] as n}<span>{@render icon(n, 15)}</span>{/each}</div>
      <div class="pr2">{@render icon('keymode', 14)}<span class="field">0{@render arrows()}</span>{@render icon('clock', 15)}</div>
    </div>
    <div class="bigkey"><svg width="32" height="32" viewBox="-3 -2 28 28">{@html icons.bigkey}</svg></div>
    <div class="keys">
      <div><button class="btn k1">Auto Key</button><div class="drop kd">Selected<i></i></div></div>
      <div><button class="btn k1">Set Key</button><span class="tan">{@render icon('tangent', 17)}</span><button class="btn k2">Key Filters...</button></div>
    </div>
    <div class="nav">{#each ['zoom', 'zoomall', 'extents', 'extall', 'fov', 'pan', 'orbit', 'maxi'] as n}<span>{@render icon(n, 16)}</span>{/each}</div>
  </div>

  <div class="taskbar">
    <span class="win"><svg width="17" height="17" viewBox="0 0 17 17"><path d="M0 2.500l7.500-1V8H0zM8.500 1.300L17 0v8H8.500zM0 9h7.500v6.500L0 14.500zM8.500 9H17v8l-8.500-1.200z" fill="#fff" /></svg></span>
    <div class="search"><i></i><span>Scrivi qui per eseguire la ricerca</span><svg width="12" height="18" viewBox="0 0 12 18"><path d="M4 1h4v10H4zM1 8v5h10V8M6 13v4M3 17h6" fill="none" stroke="#333" stroke-width="1.200" /></svg></div>
    {#each apps as a}
      <span class="app" class:open={a.open} class:cur={a.on}>
        {#if a.l}<span class="adobe" style:color={a.col} style:border-color={a.col} style:background={a.bg}>{a.l}</span>
        {:else}<svg width="23" height="23" viewBox="0 0 24 24">{@html a.s}</svg>{/if}
      </span>
    {/each}
    <div class="tray">
      <svg width="16" height="17" viewBox="0 0 16 17"><g fill="none" stroke="#fff" stroke-width="1.300"><circle cx="11" cy="4" r="3" /><circle cx="5.500" cy="8" r="3" /><path d="M1 16q0-5 4.500-5T10 16M9 8q5-1 5.500 4" /></g></svg>
      <svg width="12" height="8" viewBox="0 0 12 8"><path d="M1 7l5-5 5 5" fill="none" stroke="#fff" stroke-width="1.400" /></svg>
      <svg width="17" height="12" viewBox="0 0 17 12"><path d="M2 12q-3-4 1-6 1-5 6-4 3-3 5 2 3 1 3 4t-3 4z" fill="#fff" /></svg>
      <svg width="17" height="14" viewBox="0 0 17 14"><path d="M4 2h12v8H4zM10 10v3M6 13h8M1 1h4v4H1z" fill="none" stroke="#fff" stroke-width="1.200" /></svg>
      <svg width="17" height="14" viewBox="0 0 17 14"><path d="M1 5h3l3-3v10L4 9H1zM9 5q1.500 2 0 4M11 3q3 4 0 8M13.500 1.500q4 5.500 0 11" fill="none" stroke="#fff" stroke-width="1.100" /></svg>
      <span class="clock"><span>16:03</span><span>07/02/2018</span></span>
      <svg width="17" height="17" viewBox="0 0 17 17"><path d="M1 1h15v12h-5l-2.500 3L6 13H1z" fill="none" stroke="#fff" stroke-width="1.300" /></svg>
    </div>
  </div>

  <div class="loop">
    <div class="lt"><span class="vgrip"></span><span class="ltt">Loop Tools</span><svg width="9" height="9" viewBox="0 0 9 9"><path d="M1 1l7 7M8 1L1 8" stroke="#fff" stroke-width="2.200" /></svg></div>
    <div class="lc auto"><span class="check"></span><span class="lbl">AutoLoop</span></div>
    <div class="group adj">
      <span class="gt">Adjust Loops</span>
      <div class="lrow imgs"><svg width="24" height="21" viewBox="0 0 24 21"><path d="M0 0h24v21H0z" fill="#fff" /><path d="M0 0h24v1H1v20H0z" fill="#aaa" /><path d="M2.500 2h19v17h-19z" fill="#3c566c" stroke="#000" /><path d="M3 7.500h18M3 13.500h18" stroke="#f06464" /></svg><span class="spin">{@render arrows()}</span><svg width="24" height="21" viewBox="0 0 24 21"><path d="M0 0h24v21H0z" fill="#fff" /><path d="M0 0h24v1H1v20H0z" fill="#aaa" /><path d="M2.500 2h19v17h-19z" fill="#3c566c" stroke="#000" /><path d="M3 5.500h18M3 15.500h18" stroke="#fff" /><path d="M3 10.500h18" stroke="#f06464" /></svg><span class="spin">{@render arrows()}</span></div>
      <div class="lrow pct"><span class="lbl">Percent:</span><span class="field">5{@render arrows()}</span></div>
      <div class="lrow two c1"><button class="btn">Center</button><button class="btn">Space</button></div>
    </div>
    <div class="group curv">
      <span class="gt">Curvature</span>
      <div class="lrow two c2"><button class="btn">Curve</button><button class="btn">Straight</button></div>
      <div class="lc sl"><span class="check"><svg width="10" height="10" viewBox="0 0 10 10"><path d="M1.500 4.500l3 3 4.500-6" fill="none" stroke="#e4e4e4" stroke-width="2" /></svg></span><span class="lbl">Space loop</span></div>
      <div class="lrow two c3"><button class="btn">Circle</button><button class="btn">Relax</button></div>
    </div>
  </div>
</div>

<style>
  :global(body) { margin: 0; background: #444; }
  * { box-sizing: border-box; }
  .screen { position: relative; width: 1920px; height: 1080px; overflow: hidden; background: #444; color: #f0f0f0; font: 11px/14px "Noto Sans", "Open Sans", sans-serif; letter-spacing: -.25px; white-space: nowrap; display: flex; flex-direction: column; }
  svg { display: block; flex: none; overflow: visible; }
  i { font-style: normal; }
  .title { height: 23px; background: #fff; color: #000; display: flex; align-items: center; padding-left: 2px; font: 12px/16px "Open Sans", sans-serif; letter-spacing: -.45px; }
  .name { margin-left: 5px; flex: 1; }
  .winbtns { margin: -2px 15px 0 0; }
  .menubar { height: 23px; background: linear-gradient(#555, #4b4b4b); border-top: 1px solid #3a3a3a; border-bottom: 1px solid #1c1c1c; display: flex; align-items: center; padding: 0 0 1px 13px; font: 12px/16px "Open Sans", sans-serif; color: #f4f4f4; letter-spacing: -.25px; flex: none; }
  .m { flex: none; }
  .user { margin-left: auto; width: 120px; height: 21px; background: #d0d0d0; color: #222; display: flex; align-items: center; padding: 0 4px 0 5px; }
  .user span { margin: 0 auto 0 5px; }
  .ws { margin-left: 19px; width: 67px; color: #ddd; font-size: 11px; letter-spacing: -.2px; }
  .drop { background: #646464; border: 1px solid #505050; color: #ddd; display: flex; align-items: center; justify-content: space-between; padding: 0 7px 0 5px; flex: none; }
  .drop i { width: 0; height: 0; border: 3px solid transparent; border-top: 6px solid #d8d8d8; border-bottom: 0; }
  .wsd { width: 134px; height: 20px; margin-right: 2px; font-size: 11px; padding-left: 3px; letter-spacing: -.2px; }
  .toolbar { height: 33px; display: flex; align-items: center; border-bottom: 1px solid #6a6a6a; flex: none; }
  .vgrip { width: 3px; border: dotted #a8a8a8; border-width: 0 1px; flex: none; align-self: stretch; margin: 3px 0 2px 3px; }
  .toolbar .vgrip { margin-right: 3px; }
  .tool { width: 32px; display: flex; justify-content: center; }
  .tb { width: 30px; height: 29px; display: grid; place-items: center; border-radius: 3px; }
  .tb.on { background: #5b87c0; }
  .sep { width: 6.500px; height: 18px; display: flex; justify-content: center; }
  .sep.thin { width: 4.500px; }
  .sep::after { content: ''; width: 1px; background: #1e1e1e; }
  .toolbar .drop { height: 20px; margin-bottom: 7px; }
  .ribbon { height: 40px; background: #444; display: flex; flex: none; }
  .rb { flex: 1; margin-left: 3px; }
  .rtabs { height: 20px; background: #535353; border-bottom: 1px solid #333; display: flex; align-items: flex-end; font: 12px/17px "Open Sans", sans-serif; color: #a5a5a5; letter-spacing: -.2px; }
  .rtabs svg { margin-bottom: 5px; }
  .rt.active { width: 80px; margin: 0 23px -1px 4px; padding-left: 20px; height: 18px; background: linear-gradient(#777, #5c5c5c); border: 1px solid #2c2c2c; border-bottom: 0; border-radius: 2px 2px 0 0; color: #ddd; }
  .rpanels { height: 20px; background: linear-gradient(#4a4a4a, #3a3a3a); border-bottom: 1px solid #2c2c2c; display: flex; gap: 1.500px; padding-left: 2px; font: 12px/17px "Open Sans", sans-serif; color: #e6e6e6; letter-spacing: -.2px; }
  .rpanels span { background: #484848; border: 1px solid #585858; text-align: center; height: 19px; flex: none; }

  main { height: 813px; display: flex; flex: none; }
  .hgrip { display: block; height: 3px; border: dotted #a8a8a8; border-width: 1px 0; flex: none; margin-top: 7px; margin-bottom: 1px; }
  .strip { width: 48px; margin-right: -8px; flex: none; display: flex; flex-direction: column; }
  .strip .hgrip { margin-left: 2px; margin-right: 1px; }
  .dark { margin-top: 3px; width: 40px; height: 799px; background: linear-gradient(90deg, #313131 85%, #262626); display: flex; flex-direction: column; justify-content: flex-end; }
  .playb { width: 20px; height: 20px; margin: 0 0 10px 10px; background: #505050; border: 1px solid #252525; border-radius: 3px; display: grid; place-items: center; }
  .layout { height: 44px; margin: 0 0 2px 4px; border-radius: 3px 0 0 3px; background: linear-gradient(#4d5d73, #3c7fd8); padding: 8px 2px 9px 3px; }
  .layout i { display: block; height: 27px; border: 1px solid #222; background: linear-gradient(#54595f, #66717f); }
  .explorer { width: 144px; flex: none; display: flex; flex-direction: column; }
  .explorer .hgrip { margin-left: 16px; margin-right: 7px; }
  .exmenu { display: flex; height: 18px; margin: 6px 0 0 29px; font: 12px/17px "Noto Sans", sans-serif; letter-spacing: -.4px; color: #fff; }
  .exmenu span { width: 50px; }
  .more { color: #54549a; text-align: right; padding-right: 7px; height: 14px; margin-top: 5px; font: 15px/8px "Liberation Sans"; flex: none; }
  .exbody { margin-top: 11px; height: 721px; display: flex; padding-left: 14px; }
  .iconcol { width: 22px; padding-top: 4px; margin-right: 2px; }
  .fi { height: 20px; margin-bottom: 3px; background: #5b87c0; display: grid; place-items: center; }
  .iconcol hr { border: 0; height: 1px; background: #8a8a8a; margin: 2px 2px 3px; }
  .iconcol hr + .fp { margin-top: 1px; }
  .fp { height: 23px; display: grid; place-items: center; }
  .list { width: 102px; border: 1px solid #383838; border-top: 0; display: flex; flex-direction: column; }
  .lh { height: 21px; border: 1px solid #606060; border-right: 0; background: #3f3f3f; padding-left: 1px; font-size: 11px; line-height: 20px; letter-spacing: -.25px; color: #fff; }
  .tree { flex: 1; }
  .obj { height: 18px; display: flex; align-items: center; color: #a2a2a2; font-size: 12px; }
  .branch { width: 9px; height: 18px; margin: 0 0 0 9px; border-left: 1px dotted #777; background: linear-gradient(#666, #666) 0 9px / 8px 1px no-repeat; }
  .obj:first-child .branch { height: 9px; margin-top: 9px; background-position: 0 0; }
  .obj:last-child .branch { height: 10px; margin-bottom: 8px; }
  .dot { width: 11px; height: 11px; border-radius: 50%; background: #d2d2d2; margin: 0 3px 0 2px; }
  .obj .on { flex: 1; align-self: stretch; background: #4a4a4a; padding-left: 3px; line-height: 19px; letter-spacing: -.5px; }
  .obj.odd .on { background: #545454; }
  .obj.sel .on { background: #858585; color: #fff; }
  .hscroll { height: 17px; background: #f0f0f0; display: flex; align-items: center; padding: 0 5px; }
  .hscroll i { width: 24px; height: 15px; background: #cdcdcd; margin: 0 auto 0 6px; }
  .explorer .more:last-child { margin-top: 1px; }

  .viewport { width: 1140px; height: 808px; margin-top: 5px; border: 2px solid #7c6629; background: #343434; flex: none; }
  .vlabel { font: 11px "DejaVu Sans Condensed", "Noto Sans"; fill: #d0d0d0; letter-spacing: 0; }
  .cube { font: bold 7px "Liberation Sans"; fill: #666; letter-spacing: 0; }
  .nsew { font: bold 12px "Liberation Sans"; fill: #9d9fa2; text-anchor: middle; }
  .ax { font: 11px "Liberation Sans"; }

  .command { width: 596px; display: flex; flex-direction: column; }
  .command .hgrip { margin: 7px 3px 1px 6px; }
  .ctabs { display: flex; height: 27px; margin: 3px 0 0 4px; gap: 1px; flex: none; }
  .ctabs span { width: 31px; background: #3a3a3a; border: 1px solid #353535; border-bottom: 0; border-radius: 4px 4px 0 0; display: grid; place-items: center; padding-bottom: 2px; }
  .ctabs .active { background: #444; margin-bottom: -1px; padding-bottom: 3px; }
  .cbody { display: flex; height: 771px; margin-left: 4px; border: 1px solid #373737; border-right: 0; flex: none; }
  .colA { width: 199px; padding: 6px 0 0 4px; display: flex; flex-direction: column; }
  .namerow { display: flex; height: 20px; }
  .namef { width: 169px; background: #656565; border: 1px solid #555; color: #dcdcdc; padding-left: 2px; line-height: 18px; }
  .namesw { width: 17px; margin-left: 6px; background: #a0a0a0; border: 1px solid #1a1a1a; }
  .modl { height: 20px; margin-top: 10px; width: 193px; padding-left: 2px; }
  .mods { display: grid; grid-template-columns: 90px 90px; gap: 5px 6px; margin: 11px 0 0 3px; grid-auto-rows: 18px; }
  .btn { width: 100%; height: 17px; padding: 0; margin: 0; border: 1px solid #484848; border-radius: 3px; background: #646464; color: #dcdcdc; font: inherit; letter-spacing: inherit; line-height: 14px; text-align: center; display: block; overflow: visible; }
  .mods .btn { height: 18px; padding-top: 1px; }
  .stack { margin-top: 8px; width: 194px; height: 127px; border: 1px solid #8b8f96; outline: 1px solid #fff; outline-offset: -2px; padding: 1px; color: #fff; flex: none; }
  .srow { height: 17px; display: flex; align-items: center; }
  .top { padding-left: 5px; }
  .top span { margin-left: 7px; }
  .top > :global(.ico) { margin-right: 6px; }
  .mk { margin-left: auto; margin-right: 6px; }
  .subs { margin-left: 30px; }
  .sub { border-left: 1px dotted #111; }
  .sub:last-child { border-left-color: transparent; background: linear-gradient(#111, #111) -1px 0 / 1px 8px no-repeat; }
  .sub i { width: 17px; border-top: 1px dotted #111; margin-right: 2px; }
  .sub span { flex: 1; height: 17px; line-height: 17px; padding-left: 1px; display: flex; align-items: center; }
  .sub.sel span { background: #5b87c0; }
  .base { border: solid #8a8a8a; border-width: 1px 0; height: 18px; padding-left: 7px; }
  .base span { margin-left: 8px; }
  .stools { display: flex; align-items: center; height: 22px; margin-top: 7px; padding-left: 5px; }
  .stools u { width: 1px; height: 16px; background: #222; margin: 0 8px 0 7px; }
  .stools u:nth-of-type(1) { margin: 0 6px 0 11px; }
  .stools > :global(.ico + .ico) { margin-left: 8px; }
  .stools u:nth-of-type(3) { margin: 0 9px 0 10px; }
  .icobtn { width: 22px; height: 22px; border-radius: 3px; display: grid; place-items: center; flex: none; }
  .icobtn.on { background: #5b87c0; }
  .split { display: flex; align-items: center; height: 6px; margin: 15px 5px 5px 5px; gap: 3px; }
  .split hr { flex: 1; height: 1px; border: 0; background: #646464; margin: 0; }
  .split span { width: 13px; height: 3px; border: dotted #ccc; border-width: 1px 0; }
  .rolls { display: flex; flex-direction: column; gap: 3.500px; border-right: 7px solid #3b3b3b; flex: 1; width: 195px; padding-right: 3px; }
  .rollout { background: #505050; box-shadow: inset 0 0 0 1px #5a5a5a; border-radius: 2px; flex: none; }
  .rollout header { height: 22px; display: flex; align-items: center; padding: 0 8px 1px 5px; color: #fff; }
  .rollout header.closed { height: 19px; padding-bottom: 0; }
  .rollout b { margin-left: 7px; font: bold 12px/16px "Noto Sans", sans-serif; letter-spacing: -.42px; }
  .dots { margin: -3px 0 0 auto; }
  .row { display: flex; align-items: center; color: #fff; }
  .cell { display: flex; align-items: center; flex: none; height: 100%; }
  .cell.right { justify-content: flex-end; }
  .cell.off { opacity: .42; }
  .cell.low .lbl { padding-top: 3px; }
  .opt { width: 13px; height: 16px; border: 1px solid #484848; border-radius: 3px; background: #646464; display: grid; place-items: center; }
  .opt i { width: 10px; height: 10px; border: 1px solid #000; border-top-width: 3px; }
  .check { width: 11px; height: 11px; background: #646464; border: 1px solid #4a4a4a; flex: none; }
  .check svg { margin: -1px; }
  .check + .lbl { margin-left: 1px; }
  .radio { width: 12px; height: 12px; border-radius: 50%; background: #616161; border: 1px solid #4b4b4b; flex: none; display: grid; place-items: center; margin-top: -1px; }
  .radio.on::after { content: ''; width: 6px; height: 6px; border-radius: 50%; background: #ddd; }
  .rl { margin-left: 6px; padding-top: 1px; }
  .field { width: 100%; height: 100%; background: #646464; border: 1px solid #4a4a4a; color: #ccc; display: flex; align-items: center; justify-content: space-between; padding: 0 4px 0 3px; }
  .field :global(.arrows) { margin-left: auto; }
  .spin { width: 11px; height: 16px; background: #646464; border: 1px solid #4a4a4a; display: grid; place-items: center; }
  .swatch { width: 100%; height: 100%; border: 1px solid #000; }
  .group { display: flow-root; box-shadow: inset 0 0 0 1px #3a3a3a; border-radius: 2px; }
  .gt { display: block; width: fit-content; height: 14px; margin: -7px 0 0 3px; padding: 0 2px; background: #505050; color: #fff; line-height: 15px; }
  .colB { width: 187px; padding: 2px 2px 0 0; display: flex; flex-direction: column; gap: 4px; height: 766px; overflow: hidden; }
  .vbar { width: 5px; height: 764px; margin-top: 3px; border: 1px solid #333; border-radius: 3px; background: #505050; }

  .timeline { height: 52px; display: flex; flex: none; }
  .timeline .vgrip { margin: 7px 5px 1px 2px; }
  .tl { flex: 1; }
  .slider { height: 26px; display: flex; gap: 2px; padding: 5px 0 4px; }
  .sb { width: 14px; } .st { width: 123px; }
  .sb, .st { background: #646464; border: 1px solid #585858; border-radius: 2px; text-align: center; color: #ddd; line-height: 16px; font-size: 12px; letter-spacing: -.5px; }
  .track { border-top: 1px solid #0d0d0d; height: 26px; display: flex; width: 1861px; }
  .tc { width: 49px; padding: 7px 0 0 13px; }
  .num { font: 11px "Noto Sans"; letter-spacing: -.3px; }

  .status { height: 56px; display: flex; flex: none; }
  .mx { margin: 5px 0 0 4px; width: 98px; }
  .pink, .mini { display: block; height: 22px; border: 2px solid #fff; border-top-color: #777; border-left-color: #777; }
  .pink { background: #dcc3c3; }
  .mini { height: 23px; margin-top: 1px; background: #fff; color: #777; font: 12px/18px "Liberation Mono", monospace; letter-spacing: -.1px; padding-left: 3px; }
  .vline { width: 2px; margin: 3px 5px 2px 3px; border-left: 1px solid #111; border-right: 1px solid #666; height: 51px; }
  .msgs { width: 912px; padding-top: 11px; display: flex; flex-direction: column; gap: 11px; color: #fff; letter-spacing: -.35px; }
  .coords { width: 439px; }
  .cr { display: flex; align-items: center; height: 20px; margin-top: 7px; }
  .cr > :global(.ico + .ico) { margin-left: 12.500px; }
  .cl { margin-left: 7px; width: 14px; }
  .cf + .cl { margin-left: 13px; width: 12px; }
  .cf { width: 58px; height: 19px; background: #5b5b5b; border: 1px solid #4a4a4a; color: #8f8f8f; padding-left: 2px; line-height: 19px; }
  .grid { margin-left: 17px; }
  .cr2 { display: flex; align-items: center; margin: 4px 0 0 306px; gap: 5px; }
  .cr2 .icobtn { width: 21px; height: 21px; }
  .play { width: 133px; padding-top: 9px; }
  .pr { display: flex; height: 17px; align-items: center; }
  .pr span { width: 24.500px; display: flex; justify-content: center; }
  .pr2 { display: flex; height: 17px; align-items: center; margin: 5px 0 0 5px; }
  .pr2 .field { width: 70px; margin: 0 7px 0 8px; }
  .bigkey { width: 42px; height: 43px; margin-top: 7px; background: #5e5e5e; border: 1px solid #686868; border-radius: 3px; display: grid; place-items: center; }
  .keys { margin: 7px 0 0 6px; width: 173px; }
  .keys > div { display: flex; height: 20px; margin-bottom: 3px; align-items: center; }
  .keys .btn { height: 20px; line-height: 18px; }
  .keys .k1 { width: 46px; }
  .kd { width: 115px; height: 20px; margin-left: 4px; }
  .tan { margin: 0 7px; }
  .keys .k2 { width: 88px; }
  .nav { display: grid; grid-template-columns: repeat(4, 23.500px); grid-auto-rows: 22px; margin: 6px 0 0 0; }
  .nav span { display: grid; place-items: center; }

  .taskbar { height: 40px; background: linear-gradient(90deg, #231405 0, #231405 900px, #252220 1080px, #252220 1690px, #2b2008 1750px, #1e1408 1920px); display: flex; align-items: center; flex: none; }
  .win { width: 48px; display: grid; place-items: center; }
  .search { width: 344px; height: 39px; margin: 1px 0 0 0; background: #f2f2f2; color: #444; display: flex; align-items: center; padding: 0 14px 2px 9px; font: 15px/20px "Open Sans", sans-serif; letter-spacing: -.32px; }
  .search i { width: 22px; height: 22px; border: 3px solid #000; border-radius: 50%; margin-right: 9px; }
  .search span { flex: 1; }
  .app { width: 49.100px; height: 40px; display: grid; place-items: center; background-repeat: no-repeat; }
  .app.open { background-image: linear-gradient(#a9a9f0, #a9a9f0); background-size: 40px 2px; background-position: center bottom; }
  .app.cur { background-color: #4a3f33; background-size: 100% 2px; }
  .adobe { width: 22px; height: 22px; border: 1px solid; font: 13px/20px "Open Sans"; text-align: center; letter-spacing: 0; }
  .tray { margin-left: auto; display: flex; align-items: center; padding-right: 24px; }
  .tray svg { margin-right: 7px; }
  .tray svg:first-child { margin-right: 22px; }
  .tray svg:nth-child(2) { margin-right: 9px; }
  .tray svg:last-child { margin: 0; }
  .clock { width: 65px; display: flex; flex-direction: column; align-items: center; font: 12px/18px "Open Sans"; color: #fff; margin-right: 14px; letter-spacing: -.4px; }

  .loop { position: absolute; left: 157px; top: 344px; width: 134px; height: 243px; background: #444; border: 1px solid #3a3a3a; box-shadow: 0 0 1px #555; font-size: 12px; letter-spacing: -.42px; }
  .lt { display: flex; align-items: center; height: 28px; margin: 0 5px; border-bottom: 1px solid #383838; color: #fff; padding-top: 7px; }
  .lt .vgrip { margin: 1px 9px 2px 2px; }
  .ltt { width: 91px; }
  .lc { display: flex; align-items: center; height: 12px; color: #fff; }
  .lc .lbl { margin-left: 2px; }
  .auto { margin: 7px 0 0 19px; }
  .loop .gt { background: #444; }
  .adj { margin: 12px 0 0 9px; width: 114px; height: 88px; }
  .curv { margin: 11px 0 0 9px; width: 114px; height: 74px; }
  .lrow { display: flex; align-items: center; color: #fff; }
  .imgs { margin: 6px 0 0 11px; height: 21px; }
  .imgs .spin { width: 12px; height: 15px; margin: 0 11px 0 6px; }
  .pct { margin: 6px 0 0 20px; height: 16px; }
  .pct .field { width: 41px; margin-left: 2px; }
  .two { gap: 3px; margin-left: 7px; }
  .two .btn { width: 48px; height: 17px; line-height: 15px; }
  .c1 { margin-top: 9px; } .c2 { margin-top: 4px; } .c3 { margin-top: 5px; }
  .sl { margin: 6px 0 0 23px; }
</style>
